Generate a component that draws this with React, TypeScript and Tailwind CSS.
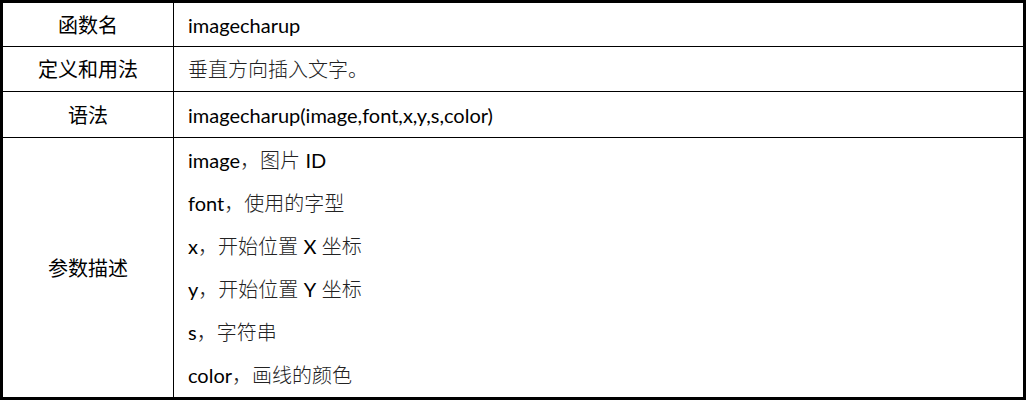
const latin = "font-['Lato','Noto_Sans_CJK_SC',sans-serif]";

type Part = { en?: string; zh?: string };

const params: Part[][] = [
  [{ en: "image" }, { zh: "，图片 " }, { en: "ID" }],
  [{ en: "font" }, { zh: "，使用的字型" }],
  [{ en: "x" }, { zh: "，开始位置 " }, { en: "X" }, { zh: " 坐标" }],
  [{ en: "y" }, { zh: "，开始位置 " }, { en: "Y" }, { zh: " 坐标" }],
  [{ en: "s" }, { zh: "，字符串" }],
  [{ en: "color" }, { zh: "，画线的颜色" }],
];

function Mixed({ parts }: { parts: Part[] }) {
  return (
    <span className="whitespace-pre">
      {parts.map((p, i) =>
        p.en ? (
          <span key={i}>{p.en}</span>
        ) : (
          <span key={i} className="font-light text-[#222]">
            {p.zh}
          </span>
        )
      )}
    </span>
  );
}

function Row({
  label,
  h,
  children,
}: {
  label: string;
  h: string;
  children: React.ReactNode;
}) {
  return (
    <div className={`flex border-b border-black ${h}`}>
      <div className="flex w-[171px] shrink-0 items-center justify-center border-r border-black">
        {label}
      </div>
      <div className="flex flex-1 items-center pl-[14px]">{children}</div>
    </div>
  );
}

export default function App() {
  return (
    <div className="h-[401px] w-[1027px] bg-white">
      <div
        className={`flex h-[400px] w-[1026px] flex-col border-[3px] border-black text-[20px] leading-none text-black ${latin}`}
      >
        <Row label="函数名" h="h-[44px]">
          imagecharup
        </Row>
        <Row label="定义和用法" h="h-[45px]">
          <span className="font-light text-[#222]">垂直方向插入文字。</span>
        </Row>
        <Row label="语法" h="h-[46px]">
          imagecharup(image,font,x,y,s,color)
        </Row>
        <div className="flex flex-1">
          <div className="flex w-[171px] shrink-0 items-center justify-center border-r border-black">
            参数描述
          </div>
          <div className="flex flex-1 flex-col justify-center pl-[14px]">
            {params.map((p, i) => (
              <div key={i} className="flex h-[43px] items-center">
                <Mixed parts={p} />
              </div>
            ))}
          </div>
        </div>
      </div>
    </div>
  );
}
